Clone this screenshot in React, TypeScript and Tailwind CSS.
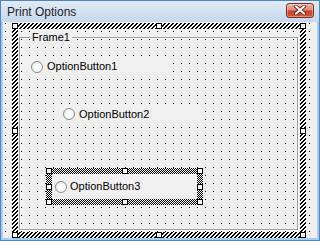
import React from 'react';

// VB6-style form designer: "Print Options" with a selected Frame and OptionButton3

const GRID =
  'bg-[#f0f0f0] bg-[image:conic-gradient(from_270deg_at_1px_1px,#000_90deg,transparent_0)] bg-[length:8px_8px] bg-[position:5px_7px] bg-fixed';

function Handle() {
  return <div className="w-[6px] h-[6px] bg-white border border-black" />;
}

// eight sizing handles laid over a selected control
function Handles() {
  return (
    <div className="absolute inset-0 flex flex-col justify-between pointer-events-none">
      <div className="flex justify-between"><Handle /><Handle /><Handle /></div>
      <div className="flex justify-between"><Handle /><Handle /></div>
      <div className="flex justify-between"><Handle /><Handle /><Handle /></div>
    </div>
  );
}

function Radio() {
  return (
    <span className="flex-shrink-0 w-[12px] h-[12px] rounded-full border border-[#8c8c8c] bg-[radial-gradient(circle_at_60%_60%,#ffffff_0,#ffffff_40%,#d6d6d6_85%)] shadow-[inset_0_0_0_1px_#f4f4f4]" />
  );
}

function Option({ label, gap = 'gap-[4px]' }: { label: string; gap?: string }) {
  return (
    <div className={`flex items-center h-full pl-[3px] ${gap} bg-[#f0f0f0] text-[11px] text-black`}>
      <Radio />
      <span className="leading-none">{label}</span>
    </div>
  );
}

function CloseButton() {
  return (
    <button
      type="button"
      aria-label="Close"
      className="ml-auto mr-[5px] mt-[-3px] w-[28px] h-[15px] rounded-[3px] border border-[#7d2b20] bg-[linear-gradient(#eab2a4_0%,#dd8b76_45%,#c4412b_55%,#d0583d_100%)] shadow-[inset_0_0_0_1px_rgba(255,255,255,0.35)] flex items-center justify-center"
    >
      <svg width="12" height="10" viewBox="0 0 12 10">
        <path d="M2 1.5l8 7M10 1.5l-8 7" stroke="#5a1c14" strokeWidth="3.6" strokeLinecap="square" />
        <path d="M2 1.5l8 7M10 1.5l-8 7" stroke="#ffffff" strokeWidth="2" strokeLinecap="square" />
      </svg>
    </button>
  );
}

export default function App() {
  return (
    <div className="w-[320px] h-[241px] flex flex-col border border-[#4f86c0] bg-[#a9cbef] font-['Liberation_Sans',Arial,sans-serif] overflow-hidden">
      {/* Title bar */}
      <div className="h-[21px] flex-shrink-0 flex items-center pl-[6px] bg-[linear-gradient(#e2ebf6,#c6d8ee)]">
        <span className="text-[12px] text-[#1e1e1e] leading-none">Print Options</span>
        <CloseButton />
      </div>

      {/* Client area */}
      <div className={`flex-1 mx-[2px] mb-[2px] pl-[9px] pt-[1px] ${GRID}`}>
        {/* Frame1, selected */}
        <div className="relative w-[294px] h-[215px] p-[6px] bg-[image:repeating-linear-gradient(135deg,#000_0_1.5px,#ffffff_1.5px_2.83px)]">
          <div className={`relative w-full h-full pl-[1px] pt-[8px] ${GRID}`}>
            <div className="w-[279px] h-[193px] border border-[#a0a0a0] shadow-[inset_1px_1px_0_#fff,1px_1px_0_#fff]" />
            <span className="absolute left-[12px] top-[2px] px-[2px] bg-[#f0f0f0] text-[11px] leading-[13px] text-black">
              Frame1
            </span>

            {/* controls placed on the designer canvas */}
            <div className="absolute left-[10px] top-[28px] w-[142px] h-[19px]">
              <Option label="OptionButton1" />
            </div>
            <div className="absolute left-[42px] top-[75px] w-[144px] h-[20px]">
              <Option label="OptionButton2" />
            </div>
            <div className="absolute left-[28px] top-[139px] w-[157px] h-[37px] p-[6px] bg-[image:repeating-conic-gradient(#000_0_25%,#fff_0_50%)] bg-[length:2px_2px]">
              <Option label="OptionButton3" gap="gap-[3px]" />
              <Handles />
            </div>
          </div>
          <Handles />
        </div>
      </div>
    </div>
  );
}
